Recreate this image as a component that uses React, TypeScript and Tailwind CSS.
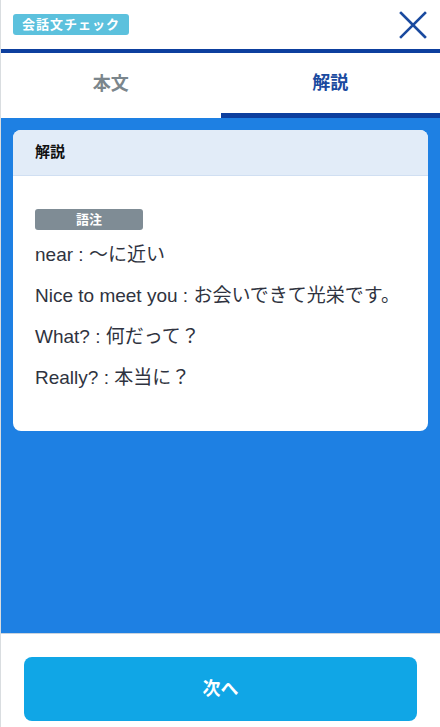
import React from 'react';

const font = { fontFamily: '"Liberation Sans", "Noto Sans CJK JP", sans-serif' };

const glossary: { en: string; ja: string }[] = [
  { en: 'near', ja: '〜に近い' },
  { en: 'Nice to meet you', ja: 'お会いできて光栄です。' },
  { en: 'What?', ja: '何だって？' },
  { en: 'Really?', ja: '本当に？' },
];

const CloseIcon: React.FC = () => (
  <svg width="28" height="28" viewBox="0 0 28 28" fill="none">
    <path d="M2 2 L26 26 M26 2 L2 26" stroke="#1a4a9f" strokeWidth="2.6" strokeLinecap="square" />
  </svg>
);

export default function App() {
  return (
    <div className="w-full h-[727px] flex flex-col bg-white border-l border-[#d9dde0]" style={font}>
      {/* header */}
      <div className="h-[49px] flex items-center justify-between pl-[12px] pr-[13px]">
        <span className="h-[21px] px-[9px] rounded-[3px] bg-[#5cc1dd] text-white text-[13px] font-bold leading-[21px] tracking-[1px]">
          会話文チェック
        </span>
        <CloseIcon />
      </div>
      <div className="h-[4px] bg-[#0d3f9e]" />

      {/* tabs */}
      <div className="h-[65px] grid grid-cols-2">
        <div className="flex items-center justify-center text-[18px] font-bold text-[#7b868c] pb-[3px]">本文</div>
        <div className="flex items-center justify-center text-[18px] font-bold text-[#1a4a9f] border-b-[5px] border-[#0d3f9e]">解説</div>
      </div>

      {/* content */}
      <div className="flex-1 bg-[#1e80e3] px-[12px] pt-[12px]">
        <div className="bg-white rounded-[8px] overflow-hidden">
          <div className="h-[46px] bg-[#e2ecf8] border-b border-[#d0dff2] flex items-center px-[22px] text-[15px] font-bold text-[#111]">
            解説
          </div>
          <div className="px-[22px] pt-[33px] pb-[33px]">
            <div className="w-[108px] h-[21px] rounded-[3px] bg-[#7f8c95] text-white text-[13px] font-bold leading-[21px] text-center">
              語注
            </div>
            <div className="pt-[4px]">
              {glossary.map((g) => (
                <p key={g.en} className="text-[19px] leading-[41px] text-[#2f3340]">
                  {g.en} : {g.ja}
                </p>
              ))}
            </div>
          </div>
        </div>
      </div>

      {/* footer */}
      <div className="h-[94px] border-t border-[#c9d3de] px-[23px] pt-[23px]">
        <button className="w-full h-[64px] rounded-[8px] bg-[#10a6e6] text-white text-[18px] font-bold">
          次へ
        </button>
      </div>
    </div>
  );
}
